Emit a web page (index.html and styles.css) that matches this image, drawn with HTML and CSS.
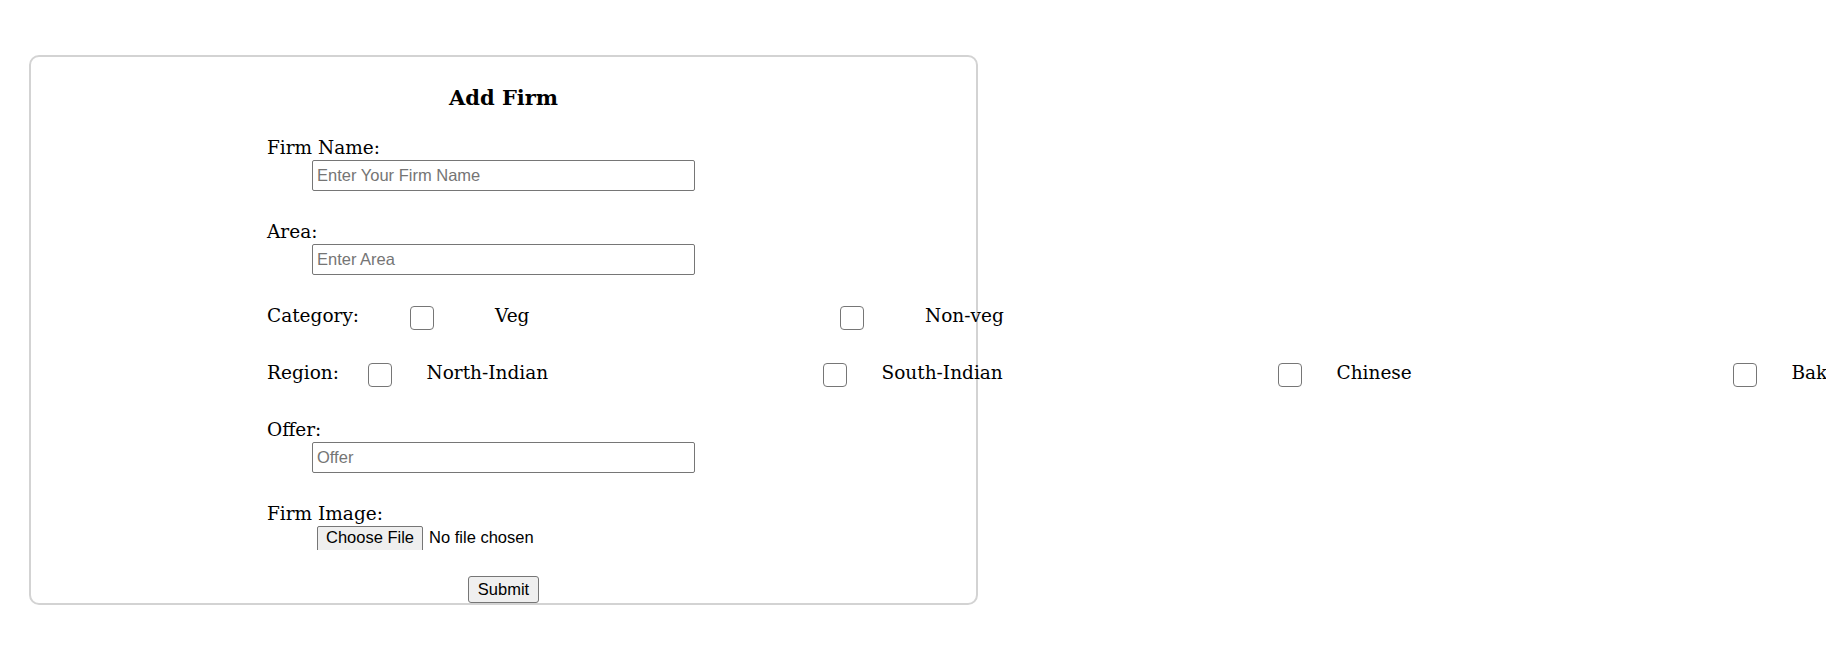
FILE: index.html
```html
<!DOCTYPE html>
<html lang="en">
<head>
<meta charset="utf-8">
<title>Add Firm</title>
<link rel="stylesheet" href="styles.css">
</head>
<body>
  <section class="panel">
    <h2 class="panel-title">Add Firm</h2>
    <form class="firm-form">
      <div class="form-body">
        <div class="field">
          <label class="field-label">Firm Name:</label>
          <input class="text-input" type="text" placeholder="Enter Your Firm Name">
        </div>
        <div class="field">
          <label class="field-label">Area:</label>
          <input class="text-input" type="text" placeholder="Enter Area">
        </div>
        <div class="check-row">
          <label class="row-label row-label-category">Category:</label>
          <div class="check-item check-item-category">
            <input class="check" type="checkbox">
            <label class="check-text">Veg</label>
          </div>
          <div class="check-item check-item-category">
            <input class="check" type="checkbox">
            <label class="check-text">Non-veg</label>
          </div>
        </div>
        <div class="check-row">
          <label class="row-label row-label-region">Region:</label>
          <div class="check-item check-item-region">
            <input class="check" type="checkbox">
            <label class="check-text">North-Indian</label>
          </div>
          <div class="check-item check-item-region">
            <input class="check" type="checkbox">
            <label class="check-text">South-Indian</label>
          </div>
          <div class="check-item check-item-region">
            <input class="check" type="checkbox">
            <label class="check-text">Chinese</label>
          </div>
          <div class="check-item check-item-region">
            <input class="check" type="checkbox">
            <label class="check-text">Bakery</label>
          </div>
        </div>
        <div class="field">
          <label class="field-label">Offer:</label>
          <input class="text-input" type="text" placeholder="Offer">
        </div>
        <div class="field">
          <label class="field-label">Firm Image:</label>
          <div class="file-wrap">
            <input class="file-input" type="file">
          </div>
        </div>
      </div>
      <div class="actions">
        <button class="submit-btn" type="button">Submit</button>
      </div>
    </form>
  </section>
</body>
</html>
```

FILE: styles.css
```css
html, body {
  background: #ffffff;
}

body {
  margin: 8px;
  font-family: "DejaVu Serif", "Liberation Serif", serif;
  color: #000;
}

.panel {
  box-sizing: border-box;
  width: 949px;
  margin: 47px 0 0 21px;
  border: 2px solid #d3d3d3;
  border-radius: 10px;
}

.panel-title {
  margin: 26px 0 23px;
  font-size: 21px;
  line-height: 30px;
  font-weight: bold;
  text-align: center;
}

.firm-form {
  margin: 0;
}

.form-body {
  display: flex;
  flex-direction: column;
  padding-left: 236px;
}

.field + .field,
.field + .check-row,
.check-row + .check-row,
.check-row + .field {
  margin-top: 29px;
}

.field {
  display: flex;
  flex-direction: column;
  align-items: flex-start;
}

.field-label,
.row-label,
.check-text {
  font-size: 18.5px;
  line-height: 24px;
  white-space: nowrap;
}

.text-input {
  box-sizing: border-box;
  width: 383px;
  height: 31px;
  margin: 0 0 0 45px;
  padding: 0 4px;
  border: 1px solid #767676;
  border-radius: 2px;
  font-family: "Liberation Sans", Arial, sans-serif;
  font-size: 16.5px;
  color: #000;
  background: #fff;
}

.text-input::placeholder {
  color: #757575;
}

.check-row {
  display: flex;
  align-items: flex-start;
  flex-wrap: nowrap;
}

.row-label {
  flex-shrink: 0;
}

.row-label-category {
  width: 143px;
}

.row-label-region {
  width: 101px;
}

.check-item {
  display: flex;
  align-items: flex-start;
  flex-shrink: 0;
}

.check-item-category {
  width: 430px;
}

.check-item-region {
  width: 455px;
}

.check {
  appearance: none;
  -webkit-appearance: none;
  box-sizing: border-box;
  flex-shrink: 0;
  width: 24px;
  height: 24px;
  margin: 1.5px 0 2.5px;
  border: 1px solid #767676;
  border-radius: 4px;
  background: #fff;
}

.check-item-category .check {
  margin-right: 61px;
}

.check-item-region .check {
  margin-right: 34.5px;
}

.file-wrap {
  height: 24px;
  margin-left: 45px;
  padding-left: 5px;
  overflow: hidden;
}

.file-input {
  margin: 0;
  padding: 0;
  font-family: "Liberation Sans", Arial, sans-serif;
  font-size: 16.5px;
  color: #000;
}

.file-input::file-selector-button {
  margin: 0 6px 0 0;
  padding: 1px 8px 5px;
  border: 1px solid #767676;
  border-radius: 2px;
  background: #efefef;
  font-family: "Liberation Sans", Arial, sans-serif;
  font-size: 16.5px;
  color: #000;
}

.actions {
  display: flex;
  justify-content: center;
  margin-top: 26px;
}

.submit-btn {
  margin: 0;
  padding: 3px 9px;
  border: 1px solid #767676;
  border-radius: 3px;
  background: #efefef;
  font-family: "Liberation Sans", Arial, sans-serif;
  font-size: 16.5px;
  line-height: normal;
  color: #000;
}
```
